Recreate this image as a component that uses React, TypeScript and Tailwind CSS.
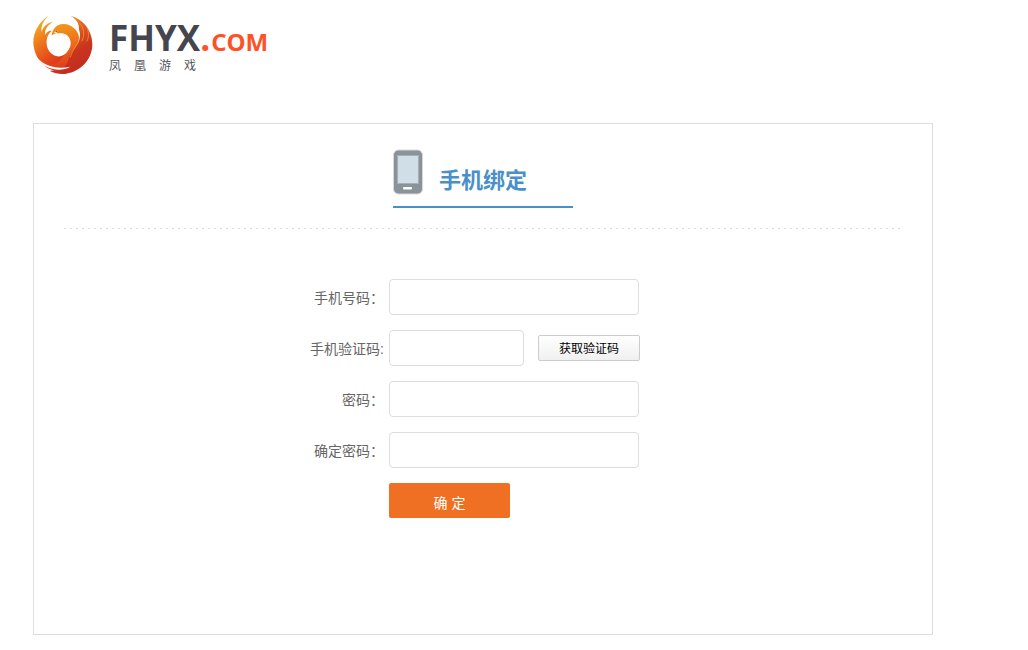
import { useId } from "react";
import type { ReactNode } from "react";

function Phoenix() {
  return (
    <svg viewBox="20 22 180 180" className="size-[60px] shrink-0" aria-hidden="true">
      <defs>
        <linearGradient id="bowl" x1="0.05" y1="0" x2="0.6" y2="1">
          <stop offset="0" stopColor="#fbbd24" />
          <stop offset="0.4" stopColor="#ee7d1c" />
          <stop offset="0.75" stopColor="#e5481b" />
          <stop offset="1" stopColor="#d9301c" />
        </linearGradient>
        <linearGradient id="neck" x1="0.3" y1="0" x2="0.4" y2="1">
          <stop offset="0" stopColor="#f39a1c" />
          <stop offset="0.5" stopColor="#ee681c" />
          <stop offset="1" stopColor="#dc381c" />
        </linearGradient>
        <linearGradient id="wing" x1="0.1" y1="0" x2="0.5" y2="1">
          <stop offset="0" stopColor="#fbbd24" />
          <stop offset="0.35" stopColor="#e4601f" />
          <stop offset="0.7" stopColor="#c9351f" />
          <stop offset="1" stopColor="#c42c1f" />
        </linearGradient>
      </defs>
      <path
        fill="url(#wing)"
        d="M132 24C170 34 198 68 198 110C198 156 162 192 120 198C104 200 86 198 70 190C98 188 112 170 116 150C122 128 146 122 155 106C162 92 163 78 158 66C160 48 150 34 132 24Z"
      />
      <path
        fill="url(#bowl)"
        d="M66 25C42 40 20 70 21 106C24 154 58 190 96 189C116 184 130 164 134 130L132 118C124 138 108 148 92 146C70 142 56 118 62 92C64 82 70 74 76 70C68 68 61 74 56 82C55 64 64 52 80 42C64 46 52 54 46 72C43 54 52 38 66 25Z"
      />
      <path
        fill="url(#neck)"
        d="M76 84C78 64 90 50 110 49C124 48 134 54 141 60C158 72 162 92 154 108C146 124 134 130 128 150C122 172 110 186 92 189C76 186 64 180 56 172C84 174 100 162 110 148C124 132 134 122 133 104C132 86 116 74 102 77C92 76 84 76 76 84Z"
      />
      <path
        fill="none"
        stroke="#f7a43a"
        strokeWidth="2"
        strokeLinecap="round"
        d="M160 46C174 62 176 82 167 100M182 60C188 74 188 88 182 100M159 96C152 116 138 126 132 148"
      />
      <path
        fill="#fff"
        d="M26 142C46 172 86 187 132 177C116 187 98 187 84 185C58 180 36 166 26 142Z"
      />
      <path fill="#fff" d="M82 75L94 69L91 76Z" />
      <circle cx="91" cy="72" r="2" fill="#8a3b1e" />
    </svg>
  );
}

function Logo() {
  return (
    <a href="#" className="flex items-start gap-4 pt-[15px]" aria-label="FHYX.COM 凤凰游戏">
      <Phoenix />
      <span className="flex flex-col pt-1">
        <span className="flex items-baseline font-['Open_Sans',sans-serif] font-bold">
          <span className="text-[35px] leading-[38px] text-[#45464d]">FHYX</span>
          <span className="text-[35px] leading-[38px] text-[#ff5126]">.</span>
          <span className="ml-px text-2xl leading-9 text-[#ff5126]">COM</span>
        </span>
        <span className="flex w-[87px] justify-between text-xs leading-3 text-[#55565c]">
          <span>凤</span>
          <span>凰</span>
          <span>游</span>
          <span>戏</span>
        </span>
      </span>
    </a>
  );
}

function PhoneIcon() {
  return (
    <svg viewBox="0 0 30 46" className="h-[46px] w-[30px]" aria-hidden="true">
      <rect x="0.5" y="1" width="29" height="44" rx="5" fill="#899398" stroke="#d5d9db" />
      <rect x="4.5" y="6.5" width="21" height="28" fill="#d0dee8" stroke="#a3b0b8" />
      <rect x="10" y="38" width="9" height="2.5" rx="1" fill="#fff" />
    </svg>
  );
}

type FieldProps = {
  label: string;
  type: string;
  width: string;
  children?: ReactNode;
};

function Field({ label, type, width, children }: FieldProps) {
  const id = useId();
  return (
    <div className="flex items-center">
      <label htmlFor={id} className="mr-[5px] w-[75px] shrink-0 pt-0.5 text-right text-sm whitespace-nowrap text-[#666]">
        {label}
      </label>
      <input id={id} type={type} className={`h-9 rounded-[4px] border border-[#ddd] bg-white px-2 text-sm outline-none ${width}`} />
      {children}
    </div>
  );
}

export default function App() {
  return (
    <div className="px-[33px] pb-[15px] font-['Liberation_Sans','Noto_Sans_CJK_SC',sans-serif]">
      <header className="flex h-[75px]">
        <Logo />
      </header>
      <main className="mt-12 max-w-[900px] border border-[#ddd] px-[30px] pb-[116px]">
        <div className="mx-auto mt-[25px] flex w-[180px] items-start gap-4 border-b-2 border-[#4a90c8] pb-[11px]">
          <PhoneIcon />
          <h1 className="pt-[18px] text-[22px] leading-7 font-bold text-[#4a90c8]">手机绑定</h1>
        </div>
        <div className="mt-5 h-px bg-[repeating-linear-gradient(90deg,#ddd_0_2px,transparent_2px_6px)]" />
        <form className="mx-auto mt-[50px] flex w-[348px] flex-col gap-[15px]" onSubmit={(e) => e.preventDefault()}>
          <Field label="手机号码：" type="tel" width="w-[250px]" />
          <Field label="手机验证码:" type="text" width="w-[135px]">
            <button
              type="button"
              className="ml-[14px] h-[26px] w-[102px] rounded-[2px] border border-[#ccc] bg-linear-to-b from-white to-[#f0f0f0] pt-0.5 text-xs whitespace-nowrap text-black"
            >
              获取验证码
            </button>
          </Field>
          <Field label="密码：" type="password" width="w-[250px]" />
          <Field label="确定密码：" type="password" width="w-[250px]" />
          <button
            type="submit"
            className="ml-20 h-[35px] w-[121px] rounded-[2px] bg-[#f07023] pt-1 text-sm text-white"
          >
            确 定
          </button>
        </form>
      </main>
    </div>
  );
}
